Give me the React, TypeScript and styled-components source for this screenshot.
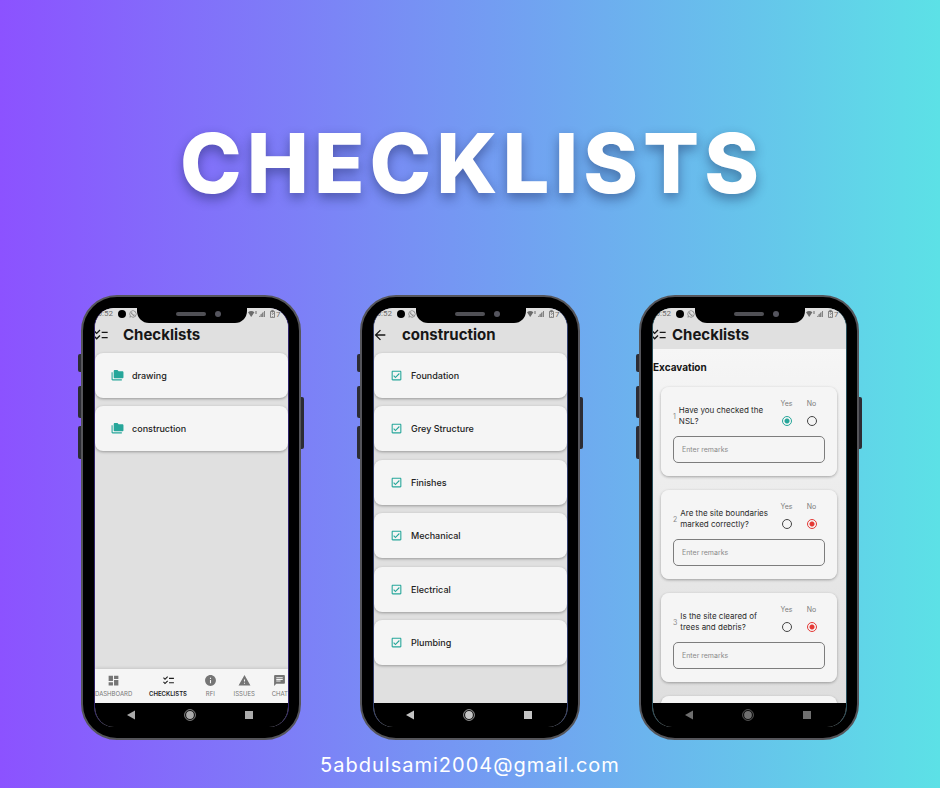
import React from "react";
import styled, { createGlobalStyle, css } from "styled-components";
import {
  MdArrowBack,
  MdChat,
  MdChecklist,
  MdDashboard,
  MdFolderCopy,
  MdInfo,
  MdOutlineCheckBox,
  MdWarning,
} from "react-icons/md";
import { FaWhatsapp } from "react-icons/fa";

const GlobalStyle = createGlobalStyle`
  *, *::before, *::after { box-sizing: border-box; }
  body {
    margin: 0;
    font-family: Inter, "Open Sans", "Liberation Sans", sans-serif;
  }
  button, input { font: inherit; margin: 0; padding: 0; }
  button { border: 0; background: none; color: inherit; cursor: pointer; }
  svg { display: block; flex: none; }
`;

const Page = styled.main`
  min-height: 100vh;
  display: flex;
  flex-direction: column;
  align-items: center;
  padding: 112px 24px 8px;
  background: linear-gradient(90deg, #8c52ff, #5ce1e6);
  overflow: hidden;
`;

const Title = styled.h1`
  margin: 0;
  padding-left: 4px;
  color: #fff;
  font-size: 83px;
  line-height: 102px;
  font-weight: 800;
  letter-spacing: 5px;
  text-align: center;
  text-shadow: 0 5px 12px rgba(20, 30, 80, 0.45);
`;

const Phones = styled.div`
  display: flex;
  flex-wrap: wrap;
  justify-content: center;
  gap: 24px 59px;
  margin-top: 81px;
`;

const Email = styled.a`
  margin-top: 11px;
  color: #fff;
  font-size: 20px;
  line-height: 28px;
  letter-spacing: 1px;
  text-decoration: none;
`;

const Frame = styled.section`
  position: relative;
  width: 220px;
  padding: 11px 10px 11px 11px;
  border: 2px solid #55555a;
  border-radius: 36px;
  background: #000;
`;

const SideButton = styled.span<{ $side: "left" | "right"; $top: number; $length: number }>`
  position: absolute;
  ${(p) => p.$side}: -5px;
  top: ${(p) => p.$top}px;
  width: 3px;
  height: ${(p) => p.$length}px;
  background: #2c2c34;
  border-radius: ${(p) => (p.$side === "left" ? "2px 0 0 2px" : "0 2px 2px 0")};
`;

const Screen = styled.div<{ $edge: string }>`
  position: relative;
  display: flex;
  flex-direction: column;
  aspect-ratio: 195 / 419;
  overflow: hidden;
  border: solid ${(p) => p.$edge};
  border-width: 0 1px;
  border-radius: 20px;
  background: #e0e0e0;
`;

const Notch = styled.div`
  position: absolute;
  top: 0;
  left: 50%;
  width: 110px;
  height: 15px;
  margin-left: -55px;
  display: flex;
  align-items: center;
  justify-content: flex-end;
  gap: 9px;
  padding: 0 26px 4px 0;
  background: #000;
  border-radius: 0 0 12px 12px;
`;

const Speaker = styled.span`
  width: 30px;
  height: 4px;
  border-radius: 2px;
  background: #505055;
`;

const Camera = styled.span`
  width: 6px;
  height: 6px;
  border-radius: 50%;
  background: #55555e;
`;

const StatusBar = styled.div`
  display: flex;
  justify-content: space-between;
  height: 12px;
  padding: 0 5px 0 0;
  color: #6b6b6b;
  font: 8px/12px Roboto, "Liberation Sans", sans-serif;
  background: #e0e0e0;
`;

const StatusGroup = styled.div`
  display: flex;
  align-items: center;
  gap: 3px;
`;

const Clock = styled.span`
  margin-left: -2px;
  padding-right: 2px;
`;

const Dot = styled.span`
  width: 8px;
  height: 8px;
  border-radius: 50%;
  background: #000;
`;

const AppBar = styled.header<{ $gap: number }>`
  display: flex;
  align-items: center;
  gap: ${(p) => p.$gap}px;
  height: 29px;
  color: #161616;
  background: #e0e0e0;

  svg { margin-left: -2px; }
`;

const ScreenTitle = styled.h2`
  margin: 0;
  font-size: 15px;
  line-height: 20px;
  font-weight: 700;
`;

const List = styled.div<{ $spread?: boolean }>`
  flex: 1;
  display: flex;
  flex-direction: column;
  gap: ${(p) => (p.$spread ? 0 : 8)}px;
  justify-content: ${(p) => (p.$spread ? "space-between" : "flex-start")};
  padding: 4px 0 ${(p) => (p.$spread ? 38 : 0)}px;
`;

const raised = css`
  background: #f5f5f5;
  box-shadow: 0 1px 3px rgba(0, 0, 0, 0.32);
`;

const ListItem = styled.button`
  ${raised}
  display: flex;
  align-items: center;
  gap: 8px;
  height: 45px;
  padding: 0 16px;
  border-radius: 8px;
  color: #222;
  font-size: 9px;
  font-weight: 500;
  text-align: left;

  svg { color: #26a69a; }
`;

const Tabs = styled.nav`
  display: flex;
  justify-content: space-between;
  height: 34px;
  padding-top: 5px;
  background: #f5f5f5;
  box-shadow: 0 -1px 3px rgba(0, 0, 0, 0.12);
`;

const Tab = styled.button<{ $active?: boolean }>`
  display: flex;
  flex-direction: column;
  align-items: center;
  gap: 3px;
  color: ${(p) => (p.$active ? "#1c1c1c" : "#757575")};
  font-size: 6px;
  line-height: 8px;
  font-weight: ${(p) => (p.$active ? 600 : 400)};
`;

const SystemNav = styled.div<{ $tint: string }>`
  display: grid;
  grid-template-columns: repeat(3, 1fr);
  justify-items: center;
  align-items: center;
  height: 24px;
  padding: 0 10px 1px 7px;
  color: ${(p) => p.$tint};
  background: #000;
`;

const SystemButton = styled.button`
  display: flex;
`;

const Form = styled.form`
  flex: 1;
  min-height: 0;
  overflow: hidden;
  display: flex;
  flex-direction: column;
  gap: 14px;
  background: linear-gradient(#f6f6f6, #dedede);
`;

const SectionTitle = styled.h3`
  flex: none;
  margin: 11px 0 -1px;
  color: #161616;
  font-size: 10px;
  line-height: 14px;
  font-weight: 700;
`;

const QuestionCard = styled.fieldset`
  ${raised}
  flex: none;
  min-width: 0;
  min-height: 89px;
  margin: 0 9px 0 8px;
  padding: 11px 12px 13px;
  border: 0;
  border-radius: 8px;
`;

const QuestionRow = styled.div`
  display: flex;
  align-items: center;
  height: 29px;
  padding-right: 1px;
`;

const Number = styled.span`
  margin-top: 7px;
  padding-right: 3px;
  color: #8a8a8a;
  font-size: 7px;
  line-height: 11px;
`;

const Question = styled.p`
  flex: 1;
  margin: 7px 0 0;
  padding-right: 4px;
  color: #2a2a2a;
  font-size: 8px;
  line-height: 11px;
`;

const Choice = styled.label`
  width: 25px;
  display: flex;
  flex-direction: column;
  align-items: center;
  gap: 8px;
  color: #7c7c7c;
  font-size: 7px;
  line-height: 9px;
`;

const Radio = styled.input<{ $tone: string }>`
  appearance: none;
  width: 10px;
  height: 10px;
  border: 1px solid #444;
  border-radius: 50%;

  &:checked {
    border-color: ${(p) => p.$tone};
    background: radial-gradient(circle, ${(p) => p.$tone} 2px, transparent 3px);
  }
`;

const Remarks = styled.input`
  display: block;
  width: 100%;
  height: 27px;
  margin-top: 9px;
  padding: 0 8px;
  border: 1px solid #7d7d7d;
  border-radius: 5px;
  background: transparent;
  color: #333;
  font-size: 7px;

  &::placeholder { color: #8a8a8a; opacity: 1; }
`;

function Status() {
  return (
    <StatusBar>
      <StatusGroup>
        <Clock>10:52</Clock>
        <Dot />
        <FaWhatsapp size={8} />
      </StatusGroup>
      <svg width="35" height="12" viewBox="0 0 35 12" fill="currentColor" aria-hidden="true">
        <path d="M0 4.3Q3.2 1.8 6.4 4.3L3.2 9Z" />
        <path d="M7.5 3h1v3h-1zM11 9l1-1.5V9zM12.5 9V6.6l1.2-1V9zM14.2 9V5l1.2-1.2V9zM16.2 9V3h.8v6z" />
        <path
          d="M22.5 3.4h4v6h-4zM23.7 2.4h1.6v1h-1.6zM23.7 5.2q1-.8 1.6 0 .3.7-.8 1.3v.5M24.5 8v.6"
          fill="none"
          stroke="currentColor"
          strokeWidth=".8"
        />
        <text x="28" y="9" fontSize="8">7</text>
      </svg>
    </StatusBar>
  );
}

interface PhoneProps {
  label: string;
  edge: string;
  tint: string;
  children: React.ReactNode;
}

function Phone({ label, edge, tint, children }: PhoneProps) {
  return (
    <Frame aria-label={label}>
      <SideButton $side="left" $top={57} $length={18} />
      <SideButton $side="left" $top={89} $length={32} />
      <SideButton $side="left" $top={129} $length={33} />
      <SideButton $side="right" $top={100} $length={52} />
      <Screen $edge={edge}>
        <Status />
        {children}
        <SystemNav $tint={tint}>
          <SystemButton type="button" aria-label="Back">
            <svg width="8" height="10" viewBox="0 0 8 10" fill="currentColor">
              <path d="M8 .6v8.8L0 5z" />
            </svg>
          </SystemButton>
          <SystemButton type="button" aria-label="Home">
            <svg width="12" height="12" viewBox="0 0 12 12" fill="currentColor">
              <circle cx="6" cy="6" r="5.4" fill="none" stroke="currentColor" strokeWidth=".8" />
              <circle cx="6" cy="6" r="3.9" />
            </svg>
          </SystemButton>
          <SystemButton type="button" aria-label="Recent apps">
            <svg width="8" height="8" viewBox="0 0 8 8" fill="currentColor">
              <rect width="8" height="8" />
            </svg>
          </SystemButton>
        </SystemNav>
        <Notch>
          <Speaker />
          <Camera />
        </Notch>
      </Screen>
    </Frame>
  );
}

const folders = ["drawing", "construction"];
const stages = ["Foundation", "Grey Structure", "Finishes", "Mechanical", "Electrical", "Plumbing"];
const tabs = [
  { label: "DASHBOARD", Icon: MdDashboard },
  { label: "CHECKLISTS", Icon: MdChecklist, active: true },
  { label: "RFI", Icon: MdInfo },
  { label: "ISSUES", Icon: MdWarning },
  { label: "CHAT", Icon: MdChat },
];
const questions = [
  { id: 1, text: "Have you checked the NSL?", answer: "Yes" },
  { id: 2, text: "Are the site boundaries marked correctly?", answer: "No" },
  { id: 3, text: "Is the site cleared of trees and debris?", answer: "No" },
];
const choices = [
  { value: "Yes", tone: "#26a69a" },
  { value: "No", tone: "#e53935" },
];

export default function App() {
  return (
    <>
      <GlobalStyle />
      <Page>
        <Title>CHECKLISTS</Title>
        <Phones>
          <Phone label="Checklists" edge="#30236b" tint="#ababab">
            <AppBar $gap={14}>
              <MdChecklist size={16} />
              <ScreenTitle>Checklists</ScreenTitle>
            </AppBar>
            <List>
              {folders.map((name) => (
                <ListItem key={name} type="button">
                  <MdFolderCopy size={13} />
                  {name}
                </ListItem>
              ))}
            </List>
            <Tabs>
              {tabs.map(({ label, Icon, active }) => (
                <Tab key={label} type="button" $active={active}>
                  <Icon size={13} />
                  {label}
                </Tab>
              ))}
            </Tabs>
          </Phone>

          <Phone label="Construction checklists" edge="#33406f" tint="#c4c4c4">
            <AppBar $gap={14}>
              <MdArrowBack size={16} />
              <ScreenTitle>construction</ScreenTitle>
            </AppBar>
            <List $spread>
              {stages.map((name) => (
                <ListItem key={name} type="button">
                  <MdOutlineCheckBox size={13} />
                  {name}
                </ListItem>
              ))}
            </List>
          </Phone>

          <Phone label="Excavation checklist" edge="#28505c" tint="#6f6f6f">
            <AppBar $gap={5}>
              <MdChecklist size={16} />
              <ScreenTitle>Checklists</ScreenTitle>
            </AppBar>
            <Form>
              <SectionTitle>Excavation</SectionTitle>
              {questions.map((q) => (
                <QuestionCard key={q.id} aria-label={q.text}>
                  <QuestionRow>
                    <Number>{q.id}</Number>
                    <Question>{q.text}</Question>
                    {choices.map((c) => (
                      <Choice key={c.value}>
                        {c.value}
                        <Radio
                          type="radio"
                          name={`question-${q.id}`}
                          value={c.value}
                          $tone={c.tone}
                          defaultChecked={q.answer === c.value}
                        />
                      </Choice>
                    ))}
                  </QuestionRow>
                  <Remarks type="text" placeholder="Enter remarks" aria-label="Enter remarks" />
                </QuestionCard>
              ))}
              <QuestionCard />
            </Form>
          </Phone>
        </Phones>
        <Email href="mailto:5abdulsami2004@gmail.com">5abdulsami2004@gmail.com</Email>
      </Page>
    </>
  );
}
